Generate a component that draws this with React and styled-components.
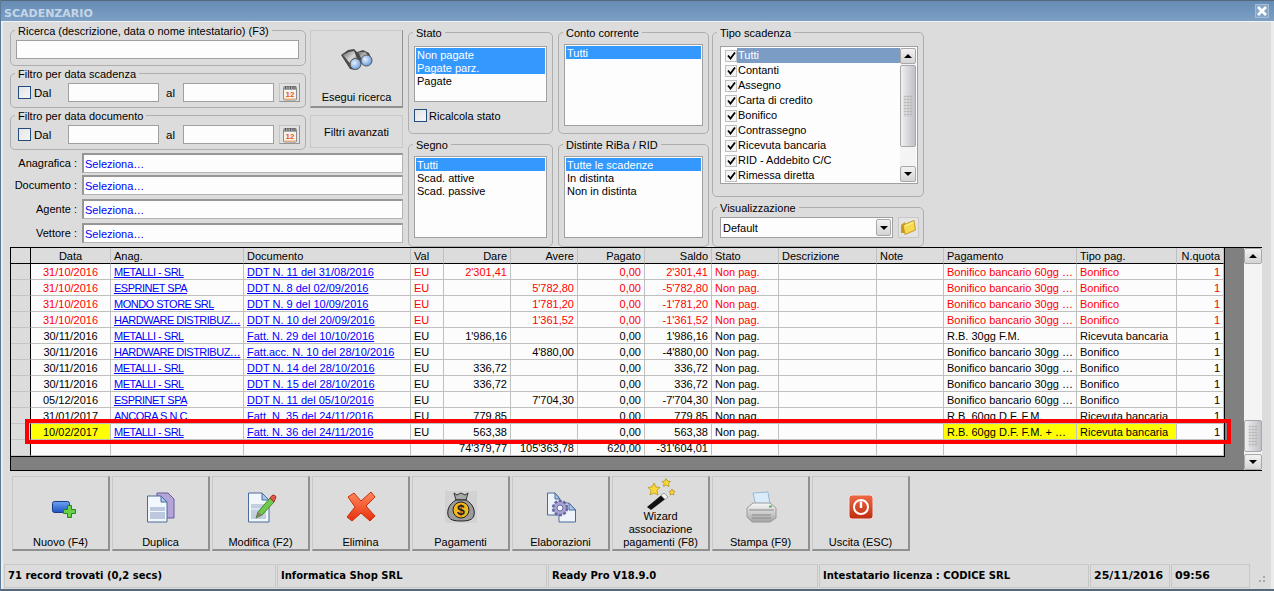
import React from "react";
import styled, { createGlobalStyle } from "styled-components";

const GlobalStyle = createGlobalStyle`
  html, body {
    margin: 0;
    padding: 0;
    overflow: hidden;
    background: #dcdcdc;
  }
  * {
    box-sizing: border-box;
  }
`;

const COLS = [20, 80, 133, 167, 33, 67, 67, 67, 67, 67, 98, 67, 133, 100, 47];

const ROWS = [
  ["31/10/2016", "METALLI - SRL", "DDT N. 11 del 31/08/2016", "2'301,41", "", "0,00", "2'301,41", "Bonifico bancario 60gg …", "Bonifico", true],
  ["31/10/2016", "ESPRINET SPA", "DDT N. 8 del 02/09/2016", "", "5'782,80", "0,00", "-5'782,80", "Bonifico bancario 30gg …", "Bonifico", true],
  ["31/10/2016", "MONDO STORE SRL", "DDT N. 9 del 10/09/2016", "", "1'781,20", "0,00", "-1'781,20", "Bonifico bancario 30gg …", "Bonifico", true],
  ["31/10/2016", "HARDWARE DISTRIBUZ…", "DDT N. 10 del 20/09/2016", "", "1'361,52", "0,00", "-1'361,52", "Bonifico bancario 30gg …", "Bonifico", true],
  ["30/11/2016", "METALLI - SRL", "Fatt. N. 29 del 10/10/2016", "1'986,16", "", "0,00", "1'986,16", "R.B. 30gg F.M.", "Ricevuta bancaria"],
  ["30/11/2016", "HARDWARE DISTRIBUZ…", "Fatt.acc. N. 10 del 28/10/2016", "", "4'880,00", "0,00", "-4'880,00", "Bonifico bancario 30gg …", "Bonifico"],
  ["30/11/2016", "METALLI - SRL", "DDT N. 14 del 28/10/2016", "336,72", "", "0,00", "336,72", "Bonifico bancario 30gg …", "Bonifico"],
  ["30/11/2016", "METALLI - SRL", "DDT N. 15 del 28/10/2016", "336,72", "", "0,00", "336,72", "Bonifico bancario 30gg …", "Bonifico"],
  ["05/12/2016", "ESPRINET SPA", "DDT N. 11 del 05/10/2016", "", "7'704,30", "0,00", "-7'704,30", "Bonifico bancario 60gg …", "Bonifico"],
  ["31/01/2017", "ANCORA S.N.C.", "Fatt. N. 35 del 24/11/2016", "779,85", "", "0,00", "779,85", "R.B. 60gg D.F. F.M.", "Ricevuta bancaria"],
  ["10/02/2017", "METALLI - SRL", "Fatt. N. 36 del 24/11/2016", "563,38", "", "0,00", "563,38", "R.B. 60gg D.F. F.M. + …", "Ricevuta bancaria", false, true],
];

const TIPI = ["Tutti", "Contanti", "Assegno", "Carta di credito", "Bonifico", "Contrassegno", "Ricevuta bancaria", "RID - Addebito C/C", "Rimessa diretta"];

function Binoculars() {
  return (
    <svg width="32" height="22" viewBox="0 0 32 22">
      <defs>
        <linearGradient id="binBody" x1="0" y1="0" x2="1" y2="1">
          <stop offset="0" stopColor="#6a6a6a" />
          <stop offset="0.5" stopColor="#d8d8d8" />
          <stop offset="1" stopColor="#444" />
        </linearGradient>
        <radialGradient id="binLens" cx="0.4" cy="0.4" r="0.7">
          <stop offset="0" stopColor="#e4f2ff" />
          <stop offset="1" stopColor="#5a90d8" />
        </radialGradient>
      </defs>
      <path d="M0 6 L7 1 L13 0 L16 3 L22 1 L28 4 L31 11 L24 17 L18 13 L15 15 L14 21 L9 20 Z" fill="#4a4a4a" />
      <path d="M2 6 L8 3 L13 2 L17 12 L12 18 Z" fill="url(#binBody)" />
      <path d="M17 3 L24 3 L30 10 L23 15 Z" fill="url(#binBody)" />
      <circle cx="14.500" cy="15" r="5.500" fill="url(#binLens)" stroke="#555" />
      <circle cx="25.500" cy="11.500" r="5.500" fill="url(#binLens)" stroke="#555" />
    </svg>
  );
}

function CalendarIcon() {
  return (
    <svg width="16" height="16" viewBox="0 0 16 16">
      <rect x="1.500" y="1.500" width="13" height="13.500" rx="1" fill="#f6f4ee" stroke="#8c8c8c" />
      <rect x="2" y="2" width="12" height="3" fill="#a8a8a8" />
      <path d="M3.500 1v3M6 1v3M8.500 1v3M11 1v3M13 1v3" stroke="#444" strokeWidth="0.8" />
      <text x="8" y="12" textAnchor="middle" fontFamily="Liberation Sans, sans-serif" fontWeight="700" fontSize="8" fill="#e8541c">12</text>
      <rect x="2" y="13.500" width="12" height="1" fill="#e8a860" />
    </svg>
  );
}

function FolderIcon() {
  return (
    <svg width="17" height="17" viewBox="0 0 17 17">
      <path d="M1 6 L5 3 L5 14 L1 14 Z" fill="#c99a1e" />
      <path d="M3 6 L14 1.500 L15.500 11 L5 15.500 Z" fill="#f7d84e" stroke="#b98c16" strokeWidth="0.8" />
      <path d="M5 7 L13.500 3.500" stroke="#fff3a8" />
    </svg>
  );
}

function NewIcon() {
  return (
    <svg width="32" height="32" viewBox="0 0 32 32">
      <defs>
        <linearGradient id="newBlue" x1="0" y1="0" x2="0" y2="1">
          <stop offset="0" stopColor="#6ea4f0" />
          <stop offset="1" stopColor="#1c54c4" />
        </linearGradient>
      </defs>
      <rect x="7.500" y="10.500" width="17" height="11" rx="2" fill="url(#newBlue)" stroke="#173c8a" />
      <path d="M22.500 14.500h4v4h4v4h-4v4h-4v-4h-4v-4h4z" fill="#6ad04a" stroke="#1c8a1c" />
    </svg>
  );
}

function DuplicateIcon() {
  return (
    <svg width="32" height="32" viewBox="0 0 32 32">
      <path d="M12 2 H23 L29 8 V27 H12 Z" fill="#b5a4d8" stroke="#6a5a9c" />
      <path d="M2.500 5 H16 L22 11 V31 H2.500 Z" fill="#f2f7fd" stroke="#4a6a9c" />
      <path d="M16 5 V11 H22 Z" fill="#a8c8f0" stroke="#4a6a9c" />
      <rect x="5" y="16" width="15" height="12" fill="#bcc8de" />
      <path d="M5 20.500h15" stroke="#f2f7fd" />
    </svg>
  );
}

function EditIcon() {
  return (
    <svg width="32" height="32" viewBox="0 0 32 32">
      <path d="M3.500 2 H17 L24 9 V31 H3.500 Z" fill="#f2f7fd" stroke="#4a6a9c" />
      <path d="M17 2 V9 H24 Z" fill="#a8c8f0" stroke="#4a6a9c" />
      <rect x="6" y="13" width="15" height="15" fill="#c4cee2" />
      <path d="M6 18h15" stroke="#f2f7fd" />
      <path d="M11 27 L13 21 L25 7 L29 11 L17 24 Z" fill="#72c84c" stroke="#3c8a2c" />
      <path d="M25 7 L27 4.500 Q29 3.500 30.500 5 Q31.500 7 30 8.500 L29 11 Z" fill="#e0584c" stroke="#a03028" />
      <path d="M11 27 L13 21 L17 24 Z" fill="#8a7a6a" />
    </svg>
  );
}

function DeleteIcon() {
  return (
    <svg width="32" height="32" viewBox="0 0 32 32">
      <defs>
        <linearGradient id="delRed" x1="0" y1="0" x2="0" y2="1">
          <stop offset="0" stopColor="#ff8a5c" />
          <stop offset="1" stopColor="#e8300c" />
        </linearGradient>
      </defs>
      <path d="M3 6 L9 2 L16 10 L26 1 L30 6 L21 15 L30 25 L25 30 L16 22 L7 30 L2 26 L10 16 Z" fill="url(#delRed)" stroke="#c8300c" strokeLinejoin="round" />
    </svg>
  );
}

function MoneyIcon() {
  return (
    <svg width="32" height="32" viewBox="0 0 32 32">
      <rect width="32" height="32" fill="#d2d2d2" />
      <path d="M9 2 L12 4 L16 2 L20 4 L23 2 L21 9 H11 Z" fill="#a8a8a8" stroke="#333" />
      <path d="M11 9 H21 C28 13 30 19 29 24 C28 29 23 30 16 30 C9 30 4 29 3 24 C2 19 4 13 11 9 Z" fill="#9c9c9c" stroke="#222" />
      <circle cx="16" cy="19" r="8" fill="#f2b81c" stroke="#222" />
      <text x="16" y="24" textAnchor="middle" fontFamily="Liberation Sans, sans-serif" fontWeight="700" fontSize="14" fill="#222">$</text>
    </svg>
  );
}

function GearDocIcon() {
  return (
    <svg width="32" height="32" viewBox="0 0 32 32">
      <path d="M2.500 2 H10 L15 8 V24 H2.500 Z" fill="#eef4fc" stroke="#4a6a9c" />
      <path d="M14 12 H24 L30.500 19 V31 H14 Z" fill="#eef4fc" stroke="#4a6a9c" />
      <path d="M10 2 V8 H15 Z M24 12 V19 H30.500 Z" fill="#a8c8f0" stroke="#4a6a9c" />
      <circle cx="15" cy="17" r="7" fill="#a8a4d4" stroke="#6a66a0" strokeDasharray="3 1.500" strokeWidth="2.500" />
      <circle cx="15" cy="17" r="3" fill="#eef4fc" stroke="#6a66a0" />
    </svg>
  );
}

function WandIcon() {
  return (
    <svg width="32" height="32" viewBox="0 0 32 32">
      <path d="M2 29 L19 15 L23 19 L6 32 Z" fill="#111" />
      <path d="M16 17.500 L19 15 L23 19 L20 21.500 Z" fill="#f4f4f4" stroke="#888" strokeWidth="0.5" />
      <path d="M9 5 L11 9 L15 9.500 L12 12.500 L13 17 L9 15 L5 17 L6 12.500 L3 9.500 L7 9 Z" fill="#f8d838" stroke="#b08c10" strokeWidth="0.7" />
      <path d="M21 0.500 L22.500 3 L25.500 3.500 L23.500 5.500 L24 8.500 L21 7 L18.500 8.500 L19 5.500 L17 3.500 L20 3 Z" fill="#f8d838" stroke="#b08c10" strokeWidth="0.7" />
      <path d="M27 11 L28 13 L30 13.500 L28.500 15 L29 17 L27 16 L25 17 L25.500 15 L24 13.500 L26 13 Z" fill="#f8d838" stroke="#b08c10" strokeWidth="0.7" />
    </svg>
  );
}

function PrinterIcon() {
  return (
    <svg width="32" height="32" viewBox="0 0 32 32">
      <defs>
        <linearGradient id="prnBody" x1="0" y1="0" x2="0" y2="1">
          <stop offset="0" stopColor="#f8f8f8" />
          <stop offset="1" stopColor="#a4a4a4" />
        </linearGradient>
      </defs>
      <path d="M8 2 L23 1 L25 13 L11 15 Z" fill="#d8ecfc" stroke="#9ab8d0" />
      <path d="M2 17 L8 12 H25 L31 17 V27 L25 31 H7 L2 26 Z" fill="url(#prnBody)" stroke="#9a9a9a" />
      <path d="M4 19 H29" stroke="#888" />
      <path d="M7 24 H26 M7 27 H26" stroke="#888" />
      <rect x="24" y="14.500" width="3" height="2" fill="#48c048" />
    </svg>
  );
}

function PowerIcon() {
  return (
    <svg width="32" height="32" viewBox="0 0 32 32">
      <defs>
        <linearGradient id="pwrRed" x1="0" y1="0" x2="0" y2="1">
          <stop offset="0" stopColor="#ee6a44" />
          <stop offset="1" stopColor="#c02c10" />
        </linearGradient>
      </defs>
      <rect x="4" y="4" width="24" height="24" rx="3" fill="url(#pwrRed)" stroke="#f0e0dc" />
      <circle cx="16" cy="16" r="7" fill="none" stroke="#fff" strokeWidth="2" />
      <path d="M16 10.500 V17" stroke="#fff" strokeWidth="2.400" />
    </svg>
  );
}

function App() {
  return (
    <Window>
      <GlobalStyle />
      <TitleBar>
        <Title>SCADENZARIO</Title>
        <CloseButton>
          <svg width="12" height="12" viewBox="0 0 12 12">
            <path d="M2 2 L10 10 M10 2 L2 10" stroke="#fff" strokeWidth="2.600" />
          </svg>
        </CloseButton>
      </TitleBar>
      <Body>
        <TopRow>
          <LeftColumn>
            <FilterRow>
              <FilterStack>
                <Group $height={42}>
                  <Legend>Ricerca (descrizione, data o nome intestatario) (F3)</Legend>
                  <GroupBody $pad="3px 0 0 5px">
                    <TextBox $width={283} />
                  </GroupBody>
                </Group>
                <DateFilter legend="Filtro per data scadenza" />
                <DateFilter legend="Filtro per data documento" />
              </FilterStack>
              <ActionStack>
                <SearchButton>
                  <Binoculars />
                  <span>Esegui ricerca</span>
                </SearchButton>
                <AdvancedButton>Filtri avanzati</AdvancedButton>
              </ActionStack>
            </FilterRow>
            <LookupRow $top={3}>
              <LookupLabel>Anagrafica :</LookupLabel>
              <LookupBox>Seleziona…</LookupBox>
            </LookupRow>
            <LookupRow $top={2}>
              <LookupLabel>Documento :</LookupLabel>
              <LookupBox>Seleziona…</LookupBox>
            </LookupRow>
            <LookupRow $top={4}>
              <LookupLabel>Agente :</LookupLabel>
              <LookupBox>Seleziona…</LookupBox>
            </LookupRow>
            <LookupRow $top={4}>
              <LookupLabel>Vettore :</LookupLabel>
              <LookupBox>Seleziona…</LookupBox>
            </LookupRow>
          </LeftColumn>

          <GroupColumn $width={145}>
            <Group $height={108}>
              <Legend>Stato</Legend>
              <GroupBody $pad="7px 0 0 5px">
                <ListBox $width={133} $height={56}>
                  <ListItem $selected>Non pagate</ListItem>
                  <ListItem $selected>Pagate parz.</ListItem>
                  <ListItem>Pagate</ListItem>
                </ListBox>
                <RecalcRow>
                  <Check />
                  Ricalcola stato
                </RecalcRow>
              </GroupBody>
            </Group>
            <Group $height={109}>
              <Legend>Segno</Legend>
              <GroupBody $pad="5px 0 0 5px">
                <ListBox $width={133} $height={82}>
                  <ListItem $selected>Tutti</ListItem>
                  <ListItem>Scad. attive</ListItem>
                  <ListItem>Scad. passive</ListItem>
                </ListBox>
              </GroupBody>
            </Group>
          </GroupColumn>

          <GroupColumn $width={151}>
            <Group $height={108}>
              <Legend>Conto corrente</Legend>
              <GroupBody $pad="5px 0 0 5px">
                <ListBox $width={139} $height={82}>
                  <ListItem $selected>Tutti</ListItem>
                </ListBox>
              </GroupBody>
            </Group>
            <Group $height={109}>
              <Legend>Distinte RiBa / RID</Legend>
              <GroupBody $pad="5px 0 0 5px">
                <ListBox $width={139} $height={82}>
                  <ListItem $selected>Tutte le scadenze</ListItem>
                  <ListItem>In distinta</ListItem>
                  <ListItem>Non in distinta</ListItem>
                </ListBox>
              </GroupBody>
            </Group>
          </GroupColumn>

          <GroupColumn $width={212} $narrow>
            <Group $height={171}>
              <Legend>Tipo scadenza</Legend>
              <GroupBody $pad="7px 0 0 7px">
                <CheckList>
                  <CheckItems>
                    {TIPI.map((t, i) => (
                      <CheckItem key={t}>
                        <TickBox>
                          <svg width="9" height="9" viewBox="0 0 9 9">
                            <path d="M1 4.500 L3.500 7.500 L8 1.500" fill="none" stroke="#000" strokeWidth="1.800" />
                          </svg>
                        </TickBox>
                        <CheckText $active={i === 0}>{t}</CheckText>
                      </CheckItem>
                    ))}
                  </CheckItems>
                  <ScrollBar $width={16}>
                    <ScrollButton $up />
                    <ScrollThumb $height={82} />
                    <ScrollSpace />
                    <ScrollButton />
                  </ScrollBar>
                </CheckList>
              </GroupBody>
            </Group>
            <Group $height={46}>
              <Legend>Visualizzazione</Legend>
              <GroupBody $pad="3px 0 0 7px">
                <ComboRow>
                  <Combo>
                    Default
                    <ComboArrow />
                  </Combo>
                  <FolderButton>
                    <FolderIcon />
                  </FolderButton>
                </ComboRow>
              </GroupBody>
            </Group>
          </GroupColumn>
        </TopRow>

        <GridWrap>
          <GridArea>
            <TableBox>
              <Table>
                <colgroup>
                  {COLS.map((w, i) => (
                    <col key={i} style={{ width: w }} />
                  ))}
                </colgroup>
                <thead>
                  <tr>
                    <HeadCell $gutter />
                    <HeadCell $align="center">Data</HeadCell>
                    <HeadCell>Anag.</HeadCell>
                    <HeadCell>Documento</HeadCell>
                    <HeadCell>Val</HeadCell>
                    <HeadCell $align="right">Dare</HeadCell>
                    <HeadCell $align="right">Avere</HeadCell>
                    <HeadCell $align="right">Pagato</HeadCell>
                    <HeadCell $align="right">Saldo</HeadCell>
                    <HeadCell>Stato</HeadCell>
                    <HeadCell>Descrizione</HeadCell>
                    <HeadCell>Note</HeadCell>
                    <HeadCell>Pagamento</HeadCell>
                    <HeadCell>Tipo pag.</HeadCell>
                    <HeadCell $align="right">N.quota</HeadCell>
                  </tr>
                </thead>
                <tbody>
                  {ROWS.map((r, i) => {
                    const [date, anag, doc, dare, avere, pagato, saldo, pag, tipo, late, due] = r;
                    return (
                      <tr key={i}>
                        <Gutter />
                        <Cell $align="center" $late={late} $due={due}>{date}</Cell>
                        <Cell><RowLink $caps>{anag}</RowLink></Cell>
                        <Cell><RowLink>{doc}</RowLink></Cell>
                        <Cell $late={late}>EU</Cell>
                        <Cell $align="right" $late={late}>{dare}</Cell>
                        <Cell $align="right" $late={late}>{avere}</Cell>
                        <Cell $align="right" $late={late}>{pagato}</Cell>
                        <Cell $align="right" $late={late}>{saldo}</Cell>
                        <Cell $late={late}>Non pag.</Cell>
                        <Cell />
                        <Cell />
                        <Cell $late={late} $due={due}>{pag}</Cell>
                        <Cell $late={late} $due={due}>{tipo}</Cell>
                        <Cell $align="right" $late={late}>1</Cell>
                      </tr>
                    );
                  })}
                  <tr>
                    <Gutter />
                    <Cell />
                    <Cell />
                    <Cell />
                    <Cell />
                    <Cell $align="right">74'379,77</Cell>
                    <Cell $align="right">105'363,78</Cell>
                    <Cell $align="right">620,00</Cell>
                    <Cell $align="right">-31'604,01</Cell>
                    <Cell />
                    <Cell />
                    <Cell />
                    <Cell />
                    <Cell />
                    <Cell />
                  </tr>
                </tbody>
              </Table>
            </TableBox>
          </GridArea>
          <ScrollBar $width={18}>
            <ScrollButton $up />
            <ScrollSpace />
            <ScrollThumb $height={32} />
            <ScrollGap />
            <ScrollButton />
          </ScrollBar>
          <Highlight />
        </GridWrap>

        <Toolbar>
          <ToolButton><IconSlot><NewIcon /></IconSlot>Nuovo (F4)</ToolButton>
          <ToolButton><IconSlot><DuplicateIcon /></IconSlot>Duplica</ToolButton>
          <ToolButton><IconSlot><EditIcon /></IconSlot>Modifica (F2)</ToolButton>
          <ToolButton><IconSlot><DeleteIcon /></IconSlot>Elimina</ToolButton>
          <ToolButton><IconSlot><MoneyIcon /></IconSlot>Pagamenti</ToolButton>
          <ToolButton><IconSlot><GearDocIcon /></IconSlot>Elaborazioni</ToolButton>
          <ToolButton><IconSlot><WandIcon /></IconSlot>Wizard<br />associazione<br />pagamenti (F8)</ToolButton>
          <ToolButton><IconSlot><PrinterIcon /></IconSlot>Stampa (F9)</ToolButton>
          <ToolButton><IconSlot><PowerIcon /></IconSlot>Uscita (ESC)</ToolButton>
        </Toolbar>

        <StatusBar>
          <StatusPanel>71 record trovati (0,2 secs)</StatusPanel>
          <StatusPanel>Informatica Shop SRL</StatusPanel>
          <StatusPanel>Ready Pro V18.9.0</StatusPanel>
          <StatusPanel>Intestatario licenza : CODICE SRL</StatusPanel>
          <StatusPanel $wide>25/11/2016</StatusPanel>
          <StatusPanel $wide>09:56</StatusPanel>
          <Grip>
            <svg width="12" height="12" viewBox="0 0 12 12">
              <path d="M8 3h2v2H8zM4 7h2v2H4zM8 7h2v2H8z" fill="#a8a8a8" />
            </svg>
          </Grip>
        </StatusBar>
      </Body>
    </Window>
  );
}

function DateFilter({ legend }) {
  return (
    <Group $height={41}>
      <Legend>{legend}</Legend>
      <GroupBody $pad="3px 0 0 7px">
        <DateRow>
          <Check />
          <DalLabel>Dal</DalLabel>
          <TextBox $width={91} />
          <AlLabel>al</AlLabel>
          <TextBox $width={91} />
          <CalendarButton>
            <CalendarIcon />
          </CalendarButton>
        </DateRow>
      </GroupBody>
    </Group>
  );
}

const Window = styled.div`
  width: 1274px;
  height: 591px;
  display: flex;
  flex-direction: column;
  background: #dcdcdc;
  border-left: 1px solid #5d7a99;
  border-bottom: 2px solid #56697c;
  font-family: "Liberation Sans", Arial, sans-serif;
  font-size: 11px;
  color: #000;
  overflow: hidden;
`;

const TitleBar = styled.div`
  height: 22px;
  flex: none;
  display: flex;
  align-items: center;
  justify-content: space-between;
  padding: 5px 6px 0 3px;
  background: linear-gradient(#668cb5, #7d9fc4);
  border-top: 1px solid #56697c;
  border-bottom: 1px solid #f0f4f8;
`;

const Title = styled.span`
  font-family: "DejaVu Sans", sans-serif;
  font-size: 11px;
  font-weight: 700;
  color: #c4d6e8;
`;

const CloseButton = styled.span`
  width: 12px;
  height: 12px;
  margin-top: -5px;
  display: flex;
  background: #86a6ca;
  outline: 1px solid #a4bcd6;
`;

const Body = styled.div`
  flex: 1;
  display: flex;
  flex-direction: column;
  padding: 2px 0 0 7px;
  border-left: 2px solid #ececec;
  border-right: 3px solid #ececec;
`;

const TopRow = styled.div`
  display: flex;
  height: 223px;
`;

const LeftColumn = styled.div`
  width: 393px;
  display: flex;
  flex-direction: column;
`;

const FilterRow = styled.div`
  display: flex;
  gap: 4px;
`;

const FilterStack = styled.div`
  width: 296px;
  display: flex;
  flex-direction: column;
  gap: 1px;
`;

const ActionStack = styled.div`
  width: 93px;
  margin-top: 6px;
  display: flex;
  flex-direction: column;
  gap: 7px;
`;

const Group = styled.fieldset`
  height: ${(p) => p.$height}px;
  margin: 0;
  padding: 0;
  min-width: 0;
  border: 1px solid #aeaeae;
  border-radius: 5px;
`;

const GroupBody = styled.div`
  padding: ${(p) => p.$pad};
`;

const Legend = styled.legend`
  height: 13px;
  margin-left: 4px;
  padding: 0 3px;
  line-height: 15px;
  white-space: nowrap;
`;

const TextBox = styled.div`
  width: ${(p) => p.$width}px;
  height: 19px;
  flex: none;
  background: #fdfdfd;
  border: 1px solid #a0a0a0;
`;

const DateRow = styled.div`
  display: flex;
  align-items: center;
`;

const Check = styled.span`
  width: 13px;
  height: 13px;
  flex: none;
  display: inline-block;
  background: linear-gradient(135deg, #e4e4e4, #f6f6f6);
  border: 1px solid #234e7c;
`;

const DalLabel = styled.span`
  width: 37px;
  padding-left: 3px;
  font-size: 11.5px;
`;

const AlLabel = styled.span`
  width: 24px;
  padding-left: 7px;
  font-size: 11.5px;
`;

const CalendarButton = styled.span`
  width: 21px;
  height: 19px;
  margin-left: 5px;
  display: flex;
  align-items: center;
  justify-content: center;
  background: #e2e2e2;
  border: 1px solid #c4c4c4;
  border-right-color: #949494;
  border-bottom-color: #949494;
`;

const PanelButton = styled.div`
  width: 93px;
  background: #dcdcdc;
  border: 1px solid #c8c8c8;
  border-right: 1px solid #909090;
  border-bottom: 2px solid #909090;
  text-align: center;
`;

const SearchButton = styled(PanelButton)`
  height: 78px;
  display: flex;
  flex-direction: column;
  align-items: center;
  justify-content: flex-end;
  gap: 20px;
  padding-bottom: 3px;
`;

const AdvancedButton = styled(PanelButton)`
  height: 33px;
  line-height: 32px;
  border-bottom-width: 1px;
  border-bottom-color: #c8c8c8;
  border-right-color: #c8c8c8;
`;

const LookupRow = styled.div`
  height: 20px;
  margin-top: ${(p) => p.$top}px;
  display: flex;
  align-items: center;
  gap: 5px;
`;

const LookupLabel = styled.span`
  width: 67px;
  text-align: right;
  white-space: nowrap;
`;

const LookupBox = styled.div`
  flex: 1;
  height: 100%;
  padding-left: 1px;
  line-height: 18px;
  background: #fdfdfd;
  color: #0000ff;
  border: 1px solid #b4b4b4;
  border-top: 2px solid #969696;
  border-left: 2px solid #969696;
`;

const GroupColumn = styled.div`
  width: ${(p) => p.$width}px;
  margin-top: 2px;
  margin-left: ${(p) => (p.$narrow ? 3 : 5)}px;
  display: flex;
  flex-direction: column;
  gap: 4px;
`;

const ListBox = styled.div`
  width: ${(p) => p.$width}px;
  height: ${(p) => p.$height}px;
  padding: 1px;
  background: #fdfdfd;
  border: 1px solid #a0a0a0;
`;

const ListItem = styled.div`
  height: 13px;
  line-height: 14px;
  padding-left: 1px;
  font-size: 11px;
  background: ${(p) => (p.$selected ? "#3399ff" : "transparent")};
  color: ${(p) => (p.$selected ? "#fff" : "#000")};
`;

const RecalcRow = styled.div`
  margin-top: 7px;
  display: flex;
  align-items: center;
  gap: 2px;
`;

const CheckList = styled.div`
  width: 198px;
  height: 138px;
  padding: 1px;
  display: flex;
  background: #fdfdfd;
  border: 1px solid #a0a0a0;
`;

const CheckItems = styled.div`
  flex: 1;
  padding-left: 3px;
`;

const CheckItem = styled.div`
  height: 15px;
  display: flex;
  align-items: center;
`;

const TickBox = styled.span`
  width: 12px;
  height: 12px;
  flex: none;
  display: flex;
  align-items: center;
  justify-content: center;
  background: #f4f4f4;
  border: 1px solid #c0c0c0;
`;

const CheckText = styled.span`
  flex: 1;
  height: 15px;
  padding-left: 1px;
  line-height: 15px;
  background: ${(p) => (p.$active ? "#7b9cc4" : "transparent")};
  color: ${(p) => (p.$active ? "#fff" : "#000")};
`;

const ScrollBar = styled.div`
  width: ${(p) => p.$width}px;
  flex: none;
  display: flex;
  flex-direction: column;
  background: #f4f4f4;
`;

const ScrollButton = styled.div`
  height: 16px;
  flex: none;
  position: relative;
  background: linear-gradient(#f2f2f2, #d4d4d4);
  border: 1px solid #a8a8a8;
  border-radius: 2px;
  &::after {
    content: "";
    position: absolute;
    left: 50%;
    top: 50%;
    margin: -2px 0 0 -4px;
    border-left: 4px solid transparent;
    border-right: 4px solid transparent;
    ${(p) => (p.$up ? "border-bottom: 4px solid #000;" : "border-top: 4px solid #000;")}
  }
`;

const ScrollThumb = styled.div`
  height: ${(p) => p.$height}px;
  flex: none;
  position: relative;
  margin-top: 1px;
  background: linear-gradient(90deg, #f0f0f0, #c0c0c8);
  border: 1px solid #a8a8a8;
  border-radius: 2px;
  &::after {
    content: "";
    position: absolute;
    left: 50%;
    top: 50%;
    width: 9px;
    height: 22px;
    transform: translate(-50%, -50%);
    background: radial-gradient(circle, #b0b0b0 0.9px, transparent 1.1px) 0 0 / 3px 3px;
  }
`;

const ScrollSpace = styled.div`
  flex: 1;
`;

const ScrollGap = styled.div`
  height: 2px;
  flex: none;
`;

const ComboRow = styled.div`
  display: flex;
  gap: 5px;
`;

const Combo = styled.div`
  width: 173px;
  height: 21px;
  padding-left: 2px;
  display: flex;
  align-items: center;
  justify-content: space-between;
  background: #fdfdfd;
  border: 1px solid #a0a0a0;
`;

const ComboArrow = styled(ScrollButton)`
  width: 15px;
  height: 17px;
  margin-right: 1px;
`;

const FolderButton = styled.div`
  width: 21px;
  height: 21px;
  display: flex;
  align-items: center;
  justify-content: center;
  background: #e4e4e4;
  border: 1px solid #c8c8c8;
`;

const GridWrap = styled.div`
  position: relative;
  width: 1252px;
  height: 224px;
  flex: none;
  display: flex;
  background: #808080;
  border-top: 1px solid #000;
  border-left: 1px solid #000;
  border-bottom: 1px solid #000;
`;

const GridArea = styled.div`
  flex: 1;
  min-width: 0;
`;

const TableBox = styled.div`
  width: 1214px;
  border-right: 1px solid #000;
  border-bottom: 1px solid #000;
`;

const Table = styled.table`
  width: 1213px;
  table-layout: fixed;
  border-collapse: separate;
  border-spacing: 0;
  font-size: 11px;
`;

const HeadCell = styled.th`
  height: 16px;
  padding: 2px 3px 0;
  font-weight: 400;
  line-height: 13px;
  text-align: ${(p) => p.$align || "left"};
  background: #dcdcdc;
  border-bottom: 1px solid #000;
  border-right: 1px solid ${(p) => (p.$gutter ? "#000" : "#c0c0c0")};
  white-space: nowrap;
  overflow: hidden;
`;

const Gutter = styled.td`
  height: 16px;
  padding: 0;
  background: #dcdcdc;
  border-right: 1px solid #000;
  border-bottom: 1px solid #c4c4c4;
`;

const Cell = styled.td`
  height: 16px;
  padding: 2px 3px 0;
  line-height: 13px;
  text-align: ${(p) => p.$align || "left"};
  white-space: nowrap;
  overflow: hidden;
  background: ${(p) => (p.$due ? "#ffff00" : "#fcfcfc")};
  color: ${(p) => (p.$late ? "#ff0000" : "#000")};
  border-right: 1px solid #c0c0c0;
  border-bottom: 1px solid #c0c0c0;
`;

const RowLink = styled.span`
  color: #0000ff;
  text-decoration: underline;
  letter-spacing: ${(p) => (p.$caps ? "-0.5px" : "0")};
`;

const Highlight = styled.div`
  position: absolute;
  left: 14px;
  top: 171px;
  width: 1206px;
  height: 25px;
  border: 4px solid #ff0000;
  pointer-events: none;
`;

const Toolbar = styled.div`
  display: flex;
  gap: 2px;
  margin-top: 5px;
  padding-left: 2px;
`;

const ToolButton = styled.div`
  width: 98px;
  height: 75px;
  display: flex;
  flex-direction: column;
  align-items: center;
  line-height: 13px;
  text-align: center;
  background: #dcdcdc;
  border: 1px solid #c8c8c8;
  border-right: 2px solid #909090;
  border-bottom: 2px solid #909090;
`;

const IconSlot = styled.div`
  flex: 1;
  min-height: 0;
  display: flex;
  align-items: center;
  justify-content: center;
`;

const StatusBar = styled.div`
  height: 24px;
  margin: 13px 0 0 -6px;
  display: grid;
  grid-template-columns: 272px 270px 270px 270px 80px 79px 1fr;
  gap: 1px;
`;

const StatusPanel = styled.div`
  padding-left: 3px;
  font-family: "DejaVu Sans", sans-serif;
  font-size: ${(p) => (p.$wide ? "11px" : "10px")};
  font-weight: 700;
  line-height: 22px;
  white-space: nowrap;
  border: 1px solid #c8c8c8;
`;

const Grip = styled.div`
  display: flex;
  align-items: flex-end;
  justify-content: center;
  padding-bottom: 3px;
`;

export default App;
